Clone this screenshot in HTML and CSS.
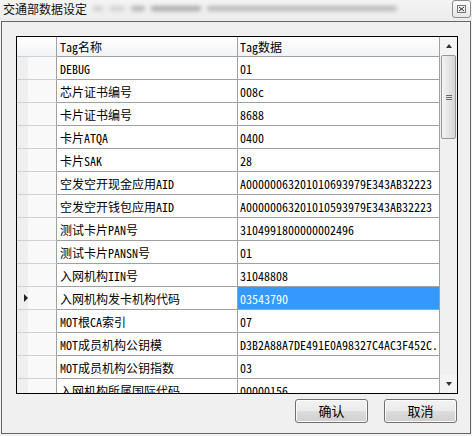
FILE: index.html
```html
<!DOCTYPE html>
<html>
<head>
<meta charset="utf-8">
<link rel="stylesheet" href="styles.css">
</head>
<body>
<div class="win">
  <div class="titlebar">
    <span class="title">交通部数据设定</span>
    <div class="smudges">
      <span class="sm s1"></span><span class="sm s2"></span><span class="sm s3"></span><span class="sm s4"></span><span class="sm s5"></span>
    </div>
    <div class="close"><svg width="9" height="8" viewBox="0 0 9 8"><rect x="0.5" y="0.5" width="8" height="7" fill="none" stroke="#777" stroke-width="1"/><path d="M2 2 L7 6 M7 2 L2 6" stroke="#333" stroke-width="1"/></svg></div>
  </div>
  <div class="frame">
    <div class="grid">
      <div class="table">
        <div class="row head"><div class="rh"></div><div class="c">Tag名称</div><div class="c d">Tag数据</div></div>
        <div class="row"><div class="rh"></div><div class="c">DEBUG</div><div class="c d">01</div></div>
        <div class="row"><div class="rh"></div><div class="c">芯片证书编号</div><div class="c d">008c</div></div>
        <div class="row"><div class="rh"></div><div class="c">卡片证书编号</div><div class="c d">8688</div></div>
        <div class="row"><div class="rh"></div><div class="c">卡片ATQA</div><div class="c d">0400</div></div>
        <div class="row"><div class="rh"></div><div class="c">卡片SAK</div><div class="c d">28</div></div>
        <div class="row"><div class="rh"></div><div class="c">空发空开现金应用AID</div><div class="c d">A00000063201010693979E343AB32223</div></div>
        <div class="row"><div class="rh"></div><div class="c">空发空开钱包应用AID</div><div class="c d">A00000063201010593979E343AB32223</div></div>
        <div class="row"><div class="rh"></div><div class="c">测试卡片PAN号</div><div class="c d">3104991800000002496</div></div>
        <div class="row"><div class="rh"></div><div class="c">测试卡片PANSN号</div><div class="c d">01</div></div>
        <div class="row"><div class="rh"></div><div class="c">入网机构IIN号</div><div class="c d">31048808</div></div>
        <div class="row"><div class="rh"><span class="cur"></span></div><div class="c">入网机构发卡机构代码</div><div class="c d sel">03543790</div></div>
        <div class="row"><div class="rh"></div><div class="c">MOT根CA索引</div><div class="c d">07</div></div>
        <div class="row"><div class="rh"></div><div class="c">MOT成员机构公钥模</div><div class="c d">D3B2A88A7DE491E0A98327C4AC3F452C.</div></div>
        <div class="row"><div class="rh"></div><div class="c">MOT成员机构公钥指数</div><div class="c d">03</div></div>
        <div class="row"><div class="rh"></div><div class="c">入网机构所属国际代码</div><div class="c d">00000156</div></div>
      </div>
      <div class="vscroll">
        <div class="arrow"><span class="tri up"></span></div>
        <div class="thumb"><span class="grip"></span><span class="grip"></span><span class="grip"></span></div>
        <div class="track"></div>
        <div class="arrow"><span class="tri down"></span></div>
      </div>
    </div>
    <div class="buttons">
      <button class="btn">确认</button>
      <button class="btn">取消</button>
    </div>
  </div>
</div>
</body>
</html>
```

FILE: styles.css
```css
html, body {
  margin: 0;
  padding: 0;
}
body {
  width: 472px;
  height: 436px;
  overflow: hidden;
  background: #f0f0f0;
}
.win {
  width: 472px;
  height: 436px;
  background: #f2f2f2;
}
.titlebar {
  height: 21px;
  display: flex;
  align-items: flex-start;
  background: linear-gradient(#f4f4f4, #ececec);
}
.title {
  padding: 2px 0 0 3px;
  font: 12px/14px "Noto Sans CJK SC", sans-serif;
  color: #111;
  white-space: nowrap;
}
.smudges {
  display: flex;
  align-items: center;
  gap: 6px;
  margin: 3px 0 0 6px;
  height: 10px;
}
.sm {
  display: block;
  height: 5px;
  background: #8a8a8a;
  filter: blur(2px);
  border-radius: 2px;
}
.s1 { width: 10px; opacity: .35; }
.s2 { width: 16px; opacity: .3; }
.s3 { width: 14px; opacity: .6; }
.s4 { width: 50px; opacity: .7; }
.s5 { width: 190px; opacity: .55; }
.close {
  margin-left: auto;
  margin-right: 1px;
  margin-top: 0;
  width: 17px;
  height: 16px;
  border: 1px solid #8c8c8c;
  border-radius: 3px;
  background: linear-gradient(#fbfbfb, #e6e6e6);
  display: flex;
  align-items: center;
  justify-content: center;
}
.frame {
  box-sizing: border-box;
  width: 470px;
  height: 413px;
  margin-left: 1px;
  border: 1px solid #666;
  background: #f0f0f0;
  padding: 14px 12px 0 14px;
}
.grid {
  box-sizing: border-box;
  width: 442px;
  height: 358px;
  border: 1px solid #000;
  display: flex;
  background: #fff;
}
.table {
  width: 423px;
  height: 356px;
  overflow: hidden;
}
.row {
  display: grid;
  grid-template-columns: 40px 181px 202px;
  height: 23px;
}
.row > div {
  box-sizing: border-box;
  border-right: 1px solid #a0a0a0;
  border-bottom: 1px solid #a0a0a0;
}
.rh {
  background: linear-gradient(to right, #efefef 0 11px, #f9f9f9 11px);
  display: flex;
  align-items: center;
}
.row > .rh {
  border-bottom-color: #d0d0d0;
  border-right-color: #a0a0a0;
}
.cur {
  margin-left: 7px;
  width: 0;
  height: 0;
  border-left: 4px solid #222;
  border-top: 4px solid transparent;
  border-bottom: 4px solid transparent;
}
.c {
  font-family: "Noto Sans Mono CJK SC", "Noto Sans CJK SC", monospace;
  font-size: 12px;
  line-height: 20px;
  padding: 2px 0 0 3px;
  color: #000;
  white-space: nowrap;
  overflow: hidden;
}
.c.d {
  padding-left: 2px;
}
.sel {
  background: #3399ff;
  color: #fff;
}
.row.head {
  height: 20px;
}
.row.head > div {
  background: linear-gradient(#ffffff, #f2f3f5);
}
.row.head > .c {
  line-height: 18px;
  padding-top: 1px;
}
.vscroll {
  width: 17px;
  height: 356px;
  display: flex;
  flex-direction: column;
  background: #f0f0f0;
}
.arrow {
  height: 18px;
  display: flex;
  align-items: center;
  justify-content: center;
  background: #f4f4f4;
}
.tri {
  width: 0;
  height: 0;
  border-left: 3.5px solid transparent;
  border-right: 3.5px solid transparent;
}
.tri.up { border-bottom: 4px solid #333; }
.tri.down { border-top: 4px solid #333; }
.thumb {
  box-sizing: border-box;
  height: 84px;
  margin: 0 1px;
  border: 1px solid #979797;
  border-radius: 2px;
  background: linear-gradient(to right, #f4f4f4, #e5e5e5 50%, #d6d6d6);
  display: flex;
  flex-direction: column;
  align-items: center;
  justify-content: center;
  gap: 1px;
}
.grip {
  display: block;
  width: 6px;
  height: 1px;
  background: #6a6a6a;
}
.track {
  flex: 1;
}
.buttons {
  display: flex;
  justify-content: flex-end;
  gap: 16px;
  margin-top: 5px;
  padding-right: 1px;
}
.btn {
  box-sizing: border-box;
  width: 73px;
  height: 24px;
  padding: 0;
  border: 1px solid #707070;
  border-radius: 3px;
  background: linear-gradient(#f2f2f2 0, #ebebeb 50%, #dddddd 50%, #cfcfcf 100%);
  box-shadow: inset 0 0 0 1px #fbfbfb;
  font: 13px/20px "Noto Sans CJK SC", sans-serif;
  color: #000;
}
```
